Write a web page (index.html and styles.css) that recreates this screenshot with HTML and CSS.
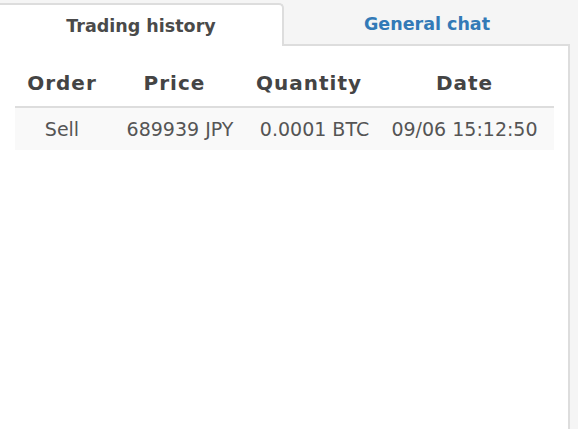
FILE: index.html
```html
<!DOCTYPE html>
<html>
<head>
<meta charset="utf-8">
<link rel="stylesheet" href="styles.css">
</head>
<body>
<div class="wrap">
  <div class="tabs">
    <div class="tab active">Trading history</div>
    <div class="tab">General chat</div>
  </div>
  <div class="panel">
    <table class="history">
      <colgroup>
        <col class="c1"><col class="c2"><col class="c3"><col class="c4">
      </colgroup>
      <thead>
        <tr><th>Order</th><th class="price">Price</th><th>Quantity</th><th class="last">Date</th></tr>
      </thead>
      <tbody>
        <tr><td>Sell</td><td class="price">689939 JPY</td><td class="qty">0.0001 BTC</td><td class="last">09/06 15:12:50</td></tr>
      </tbody>
    </table>
  </div>
</div>
</body>
</html>
```

FILE: styles.css
```css
html, body {
  margin: 0;
  padding: 0;
  height: 100%;
}
body {
  background: #f5f5f5;
  font-family: "DejaVu Sans", Verdana, sans-serif;
  color: #444;
}
.wrap {
  width: 570px;
  height: 100%;
  display: flex;
  flex-direction: column;
}
.tabs {
  display: flex;
  height: 46px;
  flex: none;
}
.tab {
  flex: 1;
  display: flex;
  align-items: center;
  justify-content: center;
  font-weight: bold;
  font-size: 17.5px;
  color: #337ab7;
  box-sizing: border-box;
  border-bottom: 2px solid #ddd;
  padding-top: 3px;
}
.tab.active {
  flex: none;
  width: 284px;
  margin-top: 3px;
  padding-top: 0;
  background: #fff;
  color: #4a4a4a;
  border-top: 2px solid #ddd;
  border-right: 2px solid #ddd;
  border-bottom: none;
  border-top-right-radius: 5px;
}
.panel {
  flex: 1;
  background: #fff;
  border-right: 2px solid #ddd;
  padding: 14px 14px 0 15px;
}
.history {
  width: 539px;
  border-collapse: collapse;
  table-layout: fixed;
}
.c1 { width: 94px; }
.c2 { width: 137px; }
.c3 { width: 126px; }
.c4 { width: 182px; }
.history th {
  font-size: 20px;
  line-height: 28px;
  padding: 9px 0;
  font-weight: bold;
  letter-spacing: 1px;
  text-align: center;
  color: #444;
  border-bottom: 2px solid #ddd;
}
.history td {
  font-size: 19px;
  line-height: 24px;
  padding: 9px 0;
  text-align: center;
  background: #f9f9f9;
  color: #555;
  white-space: nowrap;
}
.history th.price {
  padding-right: 6px;
}
.history td.price {
  padding-left: 5px;
}
.history td.qty {
  padding-left: 11px;
}
.history .last {
  padding-left: 3px;
}
```
